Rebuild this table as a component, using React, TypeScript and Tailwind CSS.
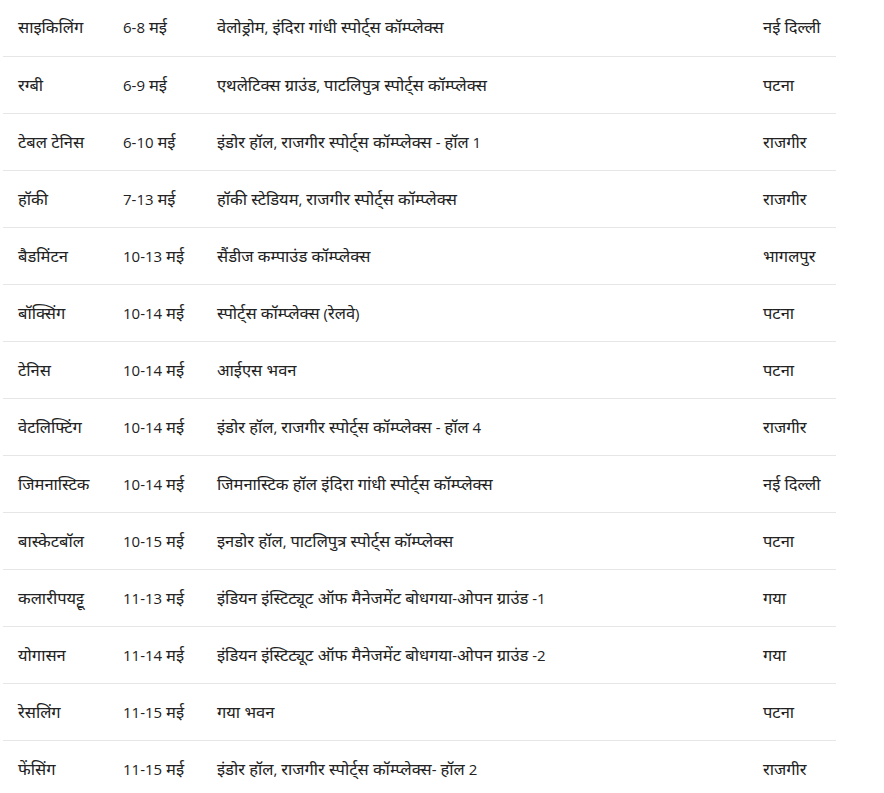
import React from 'react';

const ROWS: [string, string, string, string][] = [
  ['साइकिलिंग', '6-8 मई', 'वेलोड्रोम, इंदिरा गांधी स्पोर्ट्स कॉम्प्लेक्स', 'नई दिल्ली'],
  ['रग्बी', '6-9 मई', 'एथलेटिक्स ग्राउंड, पाटलिपुत्र स्पोर्ट्स कॉम्प्लेक्स', 'पटना'],
  ['टेबल टेनिस', '6-10 मई', 'इंडोर हॉल, राजगीर स्पोर्ट्स कॉम्प्लेक्स - हॉल 1', 'राजगीर'],
  ['हॉकी', '7-13 मई', 'हॉकी स्टेडियम, राजगीर स्पोर्ट्स कॉम्प्लेक्स', 'राजगीर'],
  ['बैडमिंटन', '10-13 मई', 'सैंडीज कम्पाउंड कॉम्प्लेक्स', 'भागलपुर'],
  ['बॉक्सिंग', '10-14 मई', 'स्पोर्ट्स कॉम्प्लेक्स (रेलवे)', 'पटना'],
  ['टेनिस', '10-14 मई', 'आईएस भवन', 'पटना'],
  ['वेटलिफ्टिंग', '10-14 मई', 'इंडोर हॉल, राजगीर स्पोर्ट्स कॉम्प्लेक्स - हॉल 4', 'राजगीर'],
  ['जिमनास्टिक', '10-14 मई', 'जिमनास्टिक हॉल इंदिरा गांधी स्पोर्ट्स कॉम्प्लेक्स', 'नई दिल्ली'],
  ['बास्केटबॉल', '10-15 मई', 'इनडोर हॉल, पाटलिपुत्र स्पोर्ट्स कॉम्प्लेक्स', 'पटना'],
  ['कलारीपयट्टू', '11-13 मई', 'इंडियन इंस्टिट्यूट ऑफ मैनेजमेंट बोधगया-ओपन ग्राउंड -1', 'गया'],
  ['योगासन', '11-14 मई', 'इंडियन इंस्टिट्यूट ऑफ मैनेजमेंट बोधगया-ओपन ग्राउंड -2', 'गया'],
  ['रेसलिंग', '11-15 मई', 'गया भवन', 'पटना'],
  ['फेंसिंग', '11-15 मई', 'इंडोर हॉल, राजगीर स्पोर्ट्स कॉम्प्लेक्स- हॉल 2', 'राजगीर'],
];

// devanagari glyphs in the fallback font run small, so bump them a little
function Mixed({ text }: { text: string }) {
  const parts = text.split(/([\u0900-\u097F]+(?:[ \u0900-\u097F]*[\u0900-\u097F])?)/);
  return (
    <>
      {parts.map((p, i) =>
        /[\u0900-\u097F]/.test(p) ? (
          <span key={i} className="text-[16.5px]">{p}</span>
        ) : (
          <React.Fragment key={i}>{p}</React.Fragment>
        )
      )}
    </>
  );
}

export default function App() {
  return (
    <div className="bg-white min-h-screen pl-[3px] font-['Open_Sans','Noto_Sans',sans-serif] text-[15px] text-[#222]">
      <table className="w-[833px] border-collapse table-fixed -mt-[1px]">
        <colgroup>
          <col className="w-[105px]" />
          <col className="w-[94px]" />
          <col className="w-[546px]" />
          <col className="w-[88px]" />
        </colgroup>
        <tbody>
          {ROWS.map((r, i) => (
            <tr key={i} className="border-b border-[#e6e6e6]">
              {r.map((c, j) => (
                <td key={j} className="h-[57px] pl-[15px] pr-0 align-middle whitespace-nowrap leading-[22px]">
                  <Mixed text={c} />
                </td>
              ))}
            </tr>
          ))}
        </tbody>
      </table>
    </div>
  );
}
